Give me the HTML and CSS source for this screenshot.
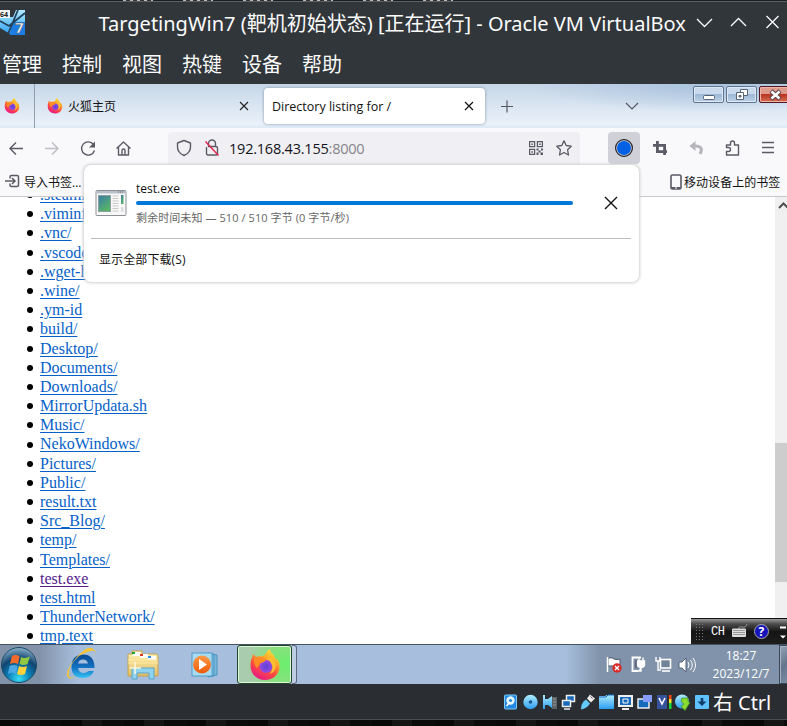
FILE: index.html
```html
<!DOCTYPE html>
<html lang="zh-CN">
<head>
<meta charset="utf-8">
<title>TargetingWin7</title>
<link rel="stylesheet" href="styles.css">
</head>
<body>
<svg class="defs" aria-hidden="true">
  <defs>
    <linearGradient id="flame" x1=".8" y1="0" x2=".3" y2="1"><stop offset="0" stop-color="#ffe83a"/><stop offset=".35" stop-color="#ffa52a"/><stop offset=".65" stop-color="#ff4a3e"/><stop offset="1" stop-color="#e5188a"/></linearGradient>
    <radialGradient id="globe"><stop offset="0" stop-color="#5a42d8"/><stop offset="1" stop-color="#9a4be0"/></radialGradient>
    <linearGradient id="sky" x1="0" y1="0" x2="0" y2="1"><stop offset="0" stop-color="#b0ecff"/><stop offset="1" stop-color="#2b9df0"/></linearGradient>
    <radialGradient id="orb" cx=".5" cy=".9" r=".9"><stop offset="0" stop-color="#39dcf5"/><stop offset=".35" stop-color="#0b82b8"/><stop offset=".65" stop-color="#11456f"/><stop offset="1" stop-color="#8bb2cc"/></radialGradient>
    <linearGradient id="orange" x1="0" y1="0" x2="0" y2="1"><stop offset="0" stop-color="#ff9a48"/><stop offset="1" stop-color="#ed5b08"/></linearGradient>
    <linearGradient id="manila" x1="0" y1="0" x2="0" y2="1"><stop offset="0" stop-color="#fff4ba"/><stop offset="1" stop-color="#e2bf62"/></linearGradient>
    <linearGradient id="ie" x1="0" y1="0" x2="0" y2="1"><stop offset="0" stop-color="#0a4690"/><stop offset=".6" stop-color="#1578c8"/><stop offset="1" stop-color="#35c3f3"/></linearGradient>
    <linearGradient id="photo" x1="0" y1="0" x2=".6" y2="1"><stop offset="0" stop-color="#3c7ca8"/><stop offset="1" stop-color="#58b565"/></linearGradient>
    <symbol id="firefox" viewBox="0 0 32 32">
      <path fill="url(#flame)" d="M16 31C8 31 1.500 25 1.500 17c0-4 .5-7 1.700-9L4 5l3 3c1.500-.8 3-.9 4.500-.4L16 6c1-2.500 2.500-4.500 5-6 .3 3 1.500 4 3.500 6l3 5.500.5-2c2 3 2.700 6 2.500 9C30 25.500 24 31 16 31z"/>
      <circle cx="17" cy="17.500" r="6.500" fill="url(#globe)"/>
      <path fill="#ff8b24" d="M5 10c4-3 8-2.500 12 1-1.500 2-3.500 3-6 3-.5 3-3 3.500-3 5.500-2-2-3.500-6-3-9.500z"/>
      <path fill="#ffbf32" d="M18 9c5-1 8 3 8.500 6 1 5-2 9-6 10 3-3 4-7 2-10-1-2.500-2.500-4-4.500-6z"/>
    </symbol>
  </defs>
</svg>

<div class="backdrop"><i></i><i></i><i></i><i></i><i></i><i></i></div>

<header class="host-title">
  <svg class="vm-logo" width="26" height="28" viewBox="0 0 26 28">
    <path fill="url(#sky)" d="M0 9L13 9l3-7h9v25H12L0 20z"/>
    <path fill="#1b7de2" d="M12 14h13v13H10z"/>
    <path d="M0 13l9 5 16-13M18 2L8 26" stroke="#23405c" stroke-width="1.800" fill="none"/>
    <rect y="2" width="10" height="8" fill="#f4f4f4"/>
    <text x="0" y="9" font-size="7" font-weight="bold" fill="#222">64</text>
    <text x="15" y="25" font-size="15" font-weight="bold" fill="#fff" stroke="#555" stroke-width=".5">7</text>
  </svg>
  <h1>TargetingWin7 (靶机初始状态) [正在运行] - Oracle VM VirtualBox</h1>
  <svg class="host-buttons" width="92" height="20" viewBox="0 0 92 20"><path d="M3 8l7.500 7.500L18 8M37 15l7.500-7.500L52 15M72.500 5l12 12m0-12l-12 12" fill="none" stroke="#fcfcfc" stroke-width="1.300"/></svg>
</header>
<nav class="host-menu"><span>管理</span><span>控制</span><span>视图</span><span>热键</span><span>设备</span><span>帮助</span></nav>

<div class="tabs">
  <div class="pinned"><svg width="16" height="16"><use href="#firefox"/></svg></div>
  <div class="tab"><svg width="16" height="16"><use href="#firefox"/></svg><span>火狐主页</span>
    <svg class="close" width="10" height="10"><path d="M1 1l8 8m0-8L1 9" stroke="#222" stroke-width="1.100"/></svg></div>
  <div class="tab active"><span>Directory listing for /</span>
    <svg class="close" width="10" height="10"><path d="M1 1l8 8m0-8L1 9" stroke="#111" stroke-width="1.200"/></svg></div>
  <svg class="plus" width="14" height="14"><path d="M1 7.500h12M7 1.500v12" stroke="#555761" stroke-width="1.200"/></svg>
  <svg class="all-tabs" width="14" height="10"><path d="M1 2l6 6 6-6" fill="none" stroke="#555761" stroke-width="1.200"/></svg>
  <div class="win-buttons">
    <b><svg width="30" height="16"><rect x="9.500" y="8.500" width="11" height="4" rx="1" fill="#fff" stroke="#566379"/></svg></b>
    <b><svg width="30" height="16"><path d="M13.500 2.500h7v6h-7z" fill="#fff" stroke="#566379"/><path d="M9.500 5.500h7v7h-7z" fill="#fff" stroke="#566379"/><path d="M12 8.500h2v1.500h-2z" fill="#8faac6" stroke="#566379"/></svg></b>
    <b class="red"><svg width="30" height="16"><path d="M11 4l9 8m0-8l-9 8" stroke="#56414a" stroke-width="4.500"/><path d="M11.500 4.500l8 7m0-7l-8 7" stroke="#fff" stroke-width="2.600"/></svg></b>
  </div>
</div>

<div class="toolbar">
  <svg class="nav" width="160" height="40" viewBox="0 0 160 40" fill="none" stroke="#5b5b66" stroke-width="1.400">
    <path d="M23 20.500H10m6-6l-6 6 6 6"/>
    <path stroke="#bebec5" d="M45 20.500h13m-6-6l6 6-6 6"/>
    <path d="M93.500 16.500A6.600 6.600 0 1 0 94.500 22.500"/><path fill="#5b5b66" stroke="none" d="M95 13.500v6h-6z"/>
    <path d="M116.500 20.500l7-6.500 7 6.500m-12-1.500V27h10v-8M122 27v-4.500q0-1.500 1.500-1.500t1.500 1.500V27" stroke-linejoin="round"/>
  </svg>
  <div class="urlbar">
    <svg width="56" height="32" viewBox="0 0 56 32" fill="none" stroke="#5b5b66" stroke-width="1.400">
      <path stroke-linejoin="round" d="M16 8.500l6.500 2.500v4c0 4-2.500 6.800-6.500 8.500-4-1.700-6.500-4.500-6.500-8.500v-4z"/>
      <path d="M40.500 14.500v-3a3.500 3.500 0 0 1 7 0v3M38.500 15v6.500q0 1.500 1.500 1.500h8q1.500 0 1.500-1.500V16q0-1.500-1.500-1.500h-8"/>
      <path stroke="#e22850" stroke-width="1.500" d="M37.500 9.500l13 14"/>
    </svg>
    <span class="url">192.168.43.155<em>:8000</em></span>
    <svg class="qr" width="14" height="14" viewBox="0 0 14 14" fill="none" stroke="#5b5b66" stroke-width="1.300">
      <path d="M.6.6h5v5h-5zM8.400.6h5v5h-5zM.6 8.400h5v5h-5z"/>
      <path fill="#5b5b66" stroke="none" d="M2.400 2.400h1.500v1.500H2.400zM10.200 2.400h1.500v1.500h-1.500zM2.400 10.200h1.500v1.500H2.400zM7.500 7.500h2v2h-2zM9.500 9.500h2v2h-2zM12 7.500h2v2h-2zM7.500 11.500h2V14h-2zM11.500 11.500H14V14h-2.500z"/></svg>
    <svg class="star" width="16" height="16" viewBox="0 0 16 16"><path d="M8 .8l2.200 4.700 5 .7-3.600 3.600.9 5.200L8 12.500 3.500 15l.9-5.200L.8 6.200l5-.7z" fill="none" stroke="#5b5b66" stroke-width="1.300" stroke-linejoin="round"/></svg>
  </div>
  <div class="dl-button"><svg width="18" height="18"><circle cx="9" cy="9" r="8.400" fill="#d0d0d9" stroke="#222" stroke-width="1.200"/><circle cx="9" cy="9" r="7" fill="#0561e3"/></svg></div>
  <svg class="actions" width="147" height="40" viewBox="0 0 147 40" fill="none" stroke="#5b5b66">
    <path stroke-width="2.800" d="M13 17.400h11.600V27M17.400 13v10.600H27"/>
    <path d="M55.500 13v10l-6-5z" stroke="none" fill="#b5b5bb"/><path d="M54 18c7-.5 9 3 6 8" stroke="#b5b5bb" stroke-width="3"/>
    <path stroke-width="1.400" stroke-linejoin="round" d="M86.500 17h4v-2a2 2 0 1 1 4 0v2h4v10h-12v-3.500h2a2 2 0 1 0 0-4h-2z"/>
    <path stroke-width="1.300" d="M122 14.500h12m-12 5h12m-12 5h12"/>
  </svg>
</div>

<div class="bookmarks">
  <svg width="16" height="16" viewBox="0 0 16 16" fill="none" stroke="#5b5b66" stroke-width="1.500"><path d="M5 4.500V3q0-1.500 1.500-1.500H12q1.500 0 1.500 1.500v8q0 1.500-1.500 1.500H6.500Q5 12.500 5 11V9.500M0 7h9.500M7 4l3 3-3 3"/></svg>
  <span class="import">导入书签...</span>
  <svg class="phone" width="12" height="16"><rect x="1" y="1" width="10" height="14" rx="1.500" fill="#fafafc" stroke="#5b5b66" stroke-width="1.600"/><path d="M1 13h10v2H1z" fill="#5b5b66"/><path d="M5 14h2" stroke="#fff"/></svg>
  <span class="mobile">移动设备上的书签</span>
</div>

<main class="page">
  <ul>
    <li><a>.steami</a></li><li><a>.viminfo</a></li><li><a>.vnc/</a></li><li><a>.vscode/</a></li><li><a>.wget-hsts</a></li><li><a>.wine/</a></li><li><a>.ym-id</a></li><li><a>build/</a></li><li><a>Desktop/</a></li><li><a>Documents/</a></li><li><a>Downloads/</a></li><li><a>MirrorUpdata.sh</a></li><li><a>Music/</a></li><li><a>NekoWindows/</a></li><li><a>Pictures/</a></li><li><a>Public/</a></li><li><a>result.txt</a></li><li><a>Src_Blog/</a></li><li><a>temp/</a></li><li><a>Templates/</a></li><li><a class="visited">test.exe</a></li><li><a>test.html</a></li><li><a>ThunderNetwork/</a></li><li><a>tmp.text</a></li>
  </ul>
  <div class="scrollbar"><svg width="12" height="14"><path d="M4 11l4.500-4.500L13 11" fill="none" stroke="#505050" stroke-width="2"/></svg><div class="thumb"></div></div>
</main>

<section class="downloads">
  <div class="item">
    <svg width="32" height="28" viewBox="0 0 32 28">
      <rect x="1" y="1.500" width="30" height="25" rx="1" fill="#f8f8f8" stroke="#8b8f94"/><path d="M1.500 2h29v2.500h-29z" fill="#b7c0cb"/><path d="M23 3h6" stroke="#5d6b7a" stroke-dasharray="1 1"/>
      <rect x="3.500" y="6.500" width="12" height="16" fill="url(#photo)" stroke="#8aa0a0"/><path d="M17.500 7h6m-6 2.500h6m-6 2.500h6m-6 2.500h6m-6 2.500h6m-6 2.500h6m-6 2.500h6" stroke="#c9c9c9"/><path d="M26 6h2.500v9H26z" fill="url(#photo)"/><path d="M26 18h2.500v5H26z" fill="#ddd"/></svg>
    <div class="info"><p class="name">test.exe</p><div class="bar"></div><p class="detail">剩余时间未知 — 510 / 510 字节 (0 字节/秒)</p></div>
    <svg class="cancel" width="14" height="14"><path d="M1 1l12 12m0-12L1 13" stroke="#111" stroke-width="1.400"/></svg>
  </div>
  <div class="show-all">显示全部下载(S)</div>
</section>

<div class="langbar">
  <i class="grip"></i><span>CH</span>
  <svg width="60" height="22" viewBox="0 0 60 22"><path d="M8 8q-1-3 3-2t5-3" fill="none" stroke="#999"/><rect x="1" y="7.500" width="14" height="8.500" rx="1" fill="#ddd"/><path d="M2.500 9.500h11m-11 2h11m-11 2h11" stroke="#555" stroke-dasharray="1 1"/>
  <circle cx="30.500" cy="10.500" r="7" fill="#1515ba" stroke="#aaa"/><text x="27.600" y="15" font-size="12" font-weight="bold" fill="#fff">?</text><path d="M49 6.500h6" stroke="#fff" stroke-width="2"/><path d="M49 14.500h6l-3 3z" fill="#fff"/></svg>
</div>

<footer class="taskbar">
  <svg class="start" width="38" height="38" viewBox="0 0 38 38"><circle cx="19" cy="19" r="17.500" fill="url(#orb)" stroke="#1c4967"/><path fill="#f36b2a" d="M12 10q4-2 7.500.5L18 18q-4-2-8 0z"/><path fill="#91c842" d="M21 11q4 2 9-.5L27.500 18q-4 2-8 0z"/><path fill="#4ca7e5" d="M9.500 20q4-2 8 0L16 28q-4-2.500-8 0z"/><path fill="#ffd13b" d="M19 20q4 2 8 0l-2 8q-4 2-8 0z"/></svg>
  <svg class="ie" width="36" height="34" viewBox="0 0 36 34"><path d="M30.500 20H14q1 5 5.500 5 3 0 5-2h5.500q-3 7-11 7Q7.500 30 7.500 18.500T19 6.500q11.500 0 11.500 13.500zM14 15.500h10q-1-4-5-4t-5 4z" fill="url(#ie)" fill-rule="evenodd"/><path d="M29 9q5-5 1-6T15 8Q3 19 5 28q1 4 8-1-6 5-8.500 3Q-1 25 12 10T30 2q4 1-1 7z" fill="#f6c437"/></svg>
  <svg class="explorer" width="34" height="32" viewBox="0 0 34 32"><path d="M2 5h4V2h10v3h14q2 0 2 2v20H2z" fill="url(#manila)" stroke="#c6a255"/><path d="M7 3h7v4H7zM14 5h8v4h-8zM22 7h8v4h-8z" fill="#fff"/><path d="M6 3h3v2H6z" fill="#17a52b"/><path d="M14 5h3v2h-3z" fill="#d43b22"/><path d="M22 7h3v2h-3z" fill="#2893e0"/><path d="M2 11h30M2 14h30" stroke="#ffe99c"/><path d="M6 30V19h22v11h-5v-6H11v6z" fill="#8fd4ef" stroke="#5ba3ca"/><path d="M9 13v12M4 19h11" stroke="#fff8dd" stroke-width="1.500"/></svg>
  <svg class="wmp" width="30" height="28" viewBox="0 0 30 28"><path d="M20 3l6 1v20l-6 1zM17 2l6 1v22l-6 1z" fill="#78b8dc" stroke="#4b96c4"/><rect x="1" y="2" width="20" height="23" fill="#a8dbf0" stroke="#509cc9"/><circle cx="11" cy="13.500" r="9" fill="url(#orange)"/><path d="M8 8l8 5.500L8 19z" fill="#fff"/></svg>
  <div class="running"><svg width="32" height="32"><use href="#firefox"/></svg></div><div class="stack"></div>
  <svg class="tray" width="92" height="22" viewBox="0 0 92 22">
    <path d="M2.500 3v15M3 4q5-1 6 1 3 1 6 0v8q-4 1-6-1H3z" fill="#fff" stroke="#495668"/><path d="M2.500 3v15" stroke="#fff" stroke-width="1.500"/><circle cx="12" cy="14" r="4.700" fill="#d82a26"/><path d="M10 12l4 4m0-4l-4 4" stroke="#fff" stroke-width="1.400"/>
    <path d="M36 3.500h-8.500v13.500H33" fill="none" stroke="#fff" stroke-width="1.800"/><path d="M32.500 7h7v4q0 2-3.500 2.500-3.500-.5-3.500-2.500zM34 3.500v3m4-3v3M36 13v4h-3" fill="#fff" stroke="#fff" stroke-width="1.400"/><path d="M31 14V6" stroke="#445"/>
    <rect x="55.500" y="5.500" width="10" height="8.500" fill="#71839b" stroke="#fff" stroke-width="1.600"/><path d="M57 17h8" stroke="#fff" stroke-width="1.600"/><path d="M51 3v4h4V3m-2 4v9h3" fill="none" stroke="#fff" stroke-width="1.400"/>
    <path d="M74 8h3l4-4v14l-4-4h-3z" fill="#fff" stroke="#526277"/><path d="M83 8q2 3 0 6m2.500-8q3.500 5 0 10m2.500-12q5 7 0 14" fill="none" stroke="#fff"/>
  </svg>
  <div class="clock"><span>18:27</span><span>2023/12/7</span></div><div class="show-desktop"></div>
</footer>

<div class="vm-status">
  <svg width="208" height="18" viewBox="0 0 208 18">
    <rect x="1.500" y="2" width="12" height="14" rx="1" fill="#2388e1" stroke="#7dcbf7"/><circle cx="7.500" cy="7.500" r="4.200" fill="#e3f7ff"/><circle cx="7.500" cy="7.500" r="1.600" fill="#2687d5"/><path d="M3.500 13l3.500-4" stroke="#fff" stroke-width="1.600"/>
    <circle cx="27.500" cy="9" r="7.200" fill="url(#sky)"/><circle cx="27.500" cy="9" r="1.800" fill="#15558f"/>
    <path d="M49 4h5v12h-5z" fill="#5d6265"/><path d="M50 6h3m-3 3h3m-3 3h3" stroke="#999"/><path d="M40 2h2v14h-2zM42 6h3l4-3v12l-4-3h-3z" fill="url(#sky)"/>
    <path d="M63.500 2.500h8v6h-8z" fill="#1769ba" stroke="#eee" stroke-width="1.500"/><path d="M59.500 7.500h8v6h-8zM61 16h6" fill="#1769ba" stroke="#eee" stroke-width="1.500"/>
    <path d="M78 16.500q0-7 5-10l4 4q-3 5-9 6z" fill="#62c9fa"/><path d="M84 5.500l3-4 5 4-4 4z" fill="#eee"/><path d="M87.500 3.500l2 2" stroke="#555"/>
    <path d="M96 3h6l2-1h7v14H96z" fill="url(#sky)"/><path d="M96 4h7l2-2h6" fill="none" stroke="#1269bb"/>
    <path d="M116 3h13v10h-13zM119 16h7" fill="#1769ba" stroke="#eee" stroke-width="2"/><path d="M120 6h5v4h-5z" fill="none" stroke="#fff"/>
    <path d="M135 6h11v9h-11z" fill="#1769ba" stroke="#eee" stroke-width="1.500"/><path d="M140 2h9v7h-9z" fill="#879cff"/>
    <rect x="154" y="2" width="10" height="14" fill="#35529c"/><path d="M156 5l3 6 3-6" fill="none" stroke="#fff" stroke-width="1.600"/><path d="M166 2h2.500v4H166z" fill="#f54718"/><path d="M166 6h2.500v4H166z" fill="#f7e129"/><path d="M166 10h2.500v6H166z" fill="#18d83c"/>
    <circle cx="179" cy="8.500" r="7" fill="url(#sky)"/><path d="M179 5h6v3.500l2 1-5 8-4-4 3-2.500-3-2.500z" fill="#8add30" stroke="#388823" stroke-width=".7"/>
    <rect x="192" y="2" width="14" height="14" rx="1" fill="#5fc1fb"/><path d="M199 5v4" stroke="#103c68" stroke-width="2.500"/><path d="M194.500 8.500h9L199 13z" fill="#103c68"/>
  </svg>
  <span class="key-cjk">右</span><span class="key">Ctrl</span>
</div>
<div class="wallpaper"></div>
</body>
</html>
```
FILE: styles.css
```css
* { box-sizing: border-box; }
body { margin: 0; width: 787px; height: 726px; overflow: hidden; position: relative; background: #fff; color: #111; font: 12px "Open Sans", "Noto Sans CJK SC", sans-serif; }
svg { display: block; flex: none; }
.defs { position: absolute; width: 0; height: 0; }
h1, p, ul { margin: 0; padding: 0; font-weight: normal; }
span { white-space: nowrap; }

.backdrop { height: 2px; background: #1b1e20; border-bottom: 1px solid #5b6064; display: flex; gap: 30px; padding-left: 123px; }
.backdrop i { width: 30px; height: 1px; background: repeating-linear-gradient(90deg, #bbb 0 3px, #333 3px 7px); }
.host-title { height: 44px; background: #31363b; display: flex; align-items: flex-start; }
.vm-logo { margin-top: 6px; }
.host-title h1 { margin-left: 72.500px; width: 588px; color: #fcfcfc; font: 20px/44px "Noto Sans", "Noto Sans CJK SC", sans-serif; white-space: nowrap; }
.host-buttons { margin-top: 9px; margin-left: 7px; }
.host-menu { height: 38px; padding-left: 2px; background: #31363b; display: flex; gap: 20px; color: #fcfcfc; font: 20px/36px "Noto Sans CJK SC", sans-serif; }

.tabs { height: 44px; display: flex; align-items: center; background: radial-gradient(ellipse 180px 28px at 710px 0, #a9c2de, transparent), linear-gradient(#c6d6e7, #e9f1fa 90%, #dce9f4); }
.pinned { width: 35px; flex: none; height: 44px; border-right: 1px solid #929eab; padding: 14px 0 0 4px; }
.tab { width: 229px; flex: none; height: 36px; display: flex; align-items: center; padding: 0 15px 0 12px; gap: 5px; line-height: 38px; }
.tab span { padding-top: 1px; }
.tab .close { margin-left: auto; }
.tab.active { width: 221px; background: #fff; border-radius: 4px; box-shadow: 0 0 3px #7e8d9e; padding: 0 11px 0 8px; font-size: 12.500px; }
.plus { margin-left: 15px; }
.all-tabs { margin-left: 111px; }
.win-buttons { display: flex; gap: 2px; margin-left: 54px; align-self: flex-start; padding-top: 2px; }
.win-buttons b { width: 31px; height: 17px; border: 1px solid #607590; border-radius: 2px; box-shadow: inset 0 0 0 1px #dce8f4; background: linear-gradient(#c9daec 50%, #9db9d6 50%, #bbd1e7); display: flex; justify-content: center; flex: none; }
.win-buttons .red { border-color: #521824; box-shadow: inset 0 0 0 1px #edb4a8; background: linear-gradient(#dd9a8d 45%, #b8341e 50%, #d66f55); }

.toolbar { height: 40px; background: #f9f9fb; display: flex; align-items: flex-start; overflow: hidden; }
.urlbar { margin: 4px 28px 0 8px; width: 412px; height: 36px; border-radius: 4px; background: #f0f0f4; display: flex; align-items: flex-start; }
.url { margin-left: 5px; font-size: 14.500px; line-height: 34px; width: 302px; letter-spacing: -.22px; color: #15141a; }
.url em { font-style: normal; color: #85858b; }
.qr { margin-top: 9px; margin-left: -2px; }
.star { margin: 8px 0 0 13px; }
.dl-button { margin-top: 4px; width: 32px; height: 32px; border-radius: 4px; background: #d0d0d9; display: grid; place-items: center; }

.bookmarks { height: 29px; background: #f9f9fb; border-bottom: 1px solid #c8c8ca; display: flex; align-items: center; padding-left: 5px; line-height: 28px; }
.bookmarks span { padding-top: 1px; }
.import { margin-left: 3px; width: 645px; }
.phone { margin-left: 1px; }
.mobile { margin-left: 2px; letter-spacing: .05px; }

.page { height: 447px; overflow: hidden; display: flex; justify-content: space-between; }
.page ul { margin-top: -12px; padding-left: 27px; list-style: none; font: 16px/19.200px "Liberation Serif", serif; }
.page li { height: 19.200px; white-space: nowrap; display: flex; align-items: center; gap: 7px; }
.page li::before { content: ""; width: 6px; height: 6px; border-radius: 50%; background: #000; margin-top: 1px; }
.page a { color: #0561c8; text-decoration: underline; text-underline-offset: 2px; }
.page .visited { color: #551a8b; }
.scrollbar { width: 12px; height: 447px; background: #f0f0f0; overflow: hidden; }
.thumb { margin-top: 232px; height: 139px; background: #cdcdcd; }

.downloads { position: absolute; left: 84px; top: 165px; width: 555px; height: 117px; padding: 0 8px 0 7px; background: #fff; border-radius: 7px; box-shadow: 0 0 3px 1px #cfcfd3; }
.item { height: 74px; border-bottom: 1px solid #bebebe; display: flex; padding-left: 4px; }
.item > svg { margin-top: 24px; }
.info { margin-left: 9px; width: 437px; padding-top: 16px; }
.name { line-height: 16px; font-size: 12px; }
.bar { height: 4px; margin: 4px 0; border-radius: 2px; background: #0078d7; }
.detail { color: #666; font-size: 11px; line-height: 17px; white-space: nowrap; letter-spacing: .08px; }
.item .cancel { margin: 31px 0 0 31px; }
.show-all { padding-left: 8px; line-height: 42px; letter-spacing: .1px; }

.langbar { position: absolute; left: 691px; top: 618px; width: 96px; height: 26px; border-top: 1px solid #111; background: linear-gradient(#9a9a9a, #4b4b4b 20%, #151515 50%, #1d1d1d); color: #fff; display: flex; align-items: center; overflow: hidden; }
.grip { flex: none; margin-left: 4px; width: 9px; height: 18px; background: radial-gradient(#777 35%, transparent 40%) 0 0 / 3px 3px; }
.langbar span { flex: none; margin-left: 7px; width: 20px; font: 12px "Liberation Mono", monospace; letter-spacing: -.5px; }

.taskbar { height: 40px; border-top: 1px solid #485361; background: linear-gradient(90deg, #8293a9 0 40px, #a7bfdd 78px 565px, #8193aa 600px); display: flex; align-items: center; }
.ie { margin-left: 26px; }
.explorer { margin-left: 26px; }
.wmp { margin-left: 31px; }
.running { flex: none; margin-left: 16px; width: 55px; height: 39px; border: 1px solid #24432d; box-shadow: inset 0 0 0 1px #def6da; border-radius: 3px; background: radial-gradient(circle at 90% 50%, #6bee6c, #8bde80 40%, #a9ccae 75%); display: grid; place-items: center; }
.stack { flex: none; width: 5px; height: 39px; border: 1px solid #5c6c80; border-left: 0; border-radius: 0 3px 3px 0; background: #bdcde2; }
.tray { margin-left: 308px; }
.clock { flex: none; margin-left: 11px; width: 66px; color: #fff; display: flex; flex-direction: column; text-align: center; line-height: 18px; }
.show-desktop { flex: none; margin-left: 5px; width: 12px; height: 39px; border: 1px solid #39495b; box-shadow: inset 1px 1px #a5b3c4; background: linear-gradient(135deg, #96a4b6, #65768c 50%, #7e8fa5); }

.vm-status { height: 36px; background: #2a2e32; border-bottom: 1px solid #4b5054; display: flex; align-items: center; padding-left: 503px; color: #fcfcfc; }
.key-cjk { margin-left: 2px; font: 20px/36px "Noto Sans CJK SC", sans-serif; padding-top: 1px; }
.key { margin-left: 5px; font: 20px/36px "Noto Sans", sans-serif; padding-top: 3px; }
.wallpaper { height: 6px; background: repeating-linear-gradient(90deg, #080808 0 20px, #151515 20px 40px, #0b0b0b 40px 62px); }
```
